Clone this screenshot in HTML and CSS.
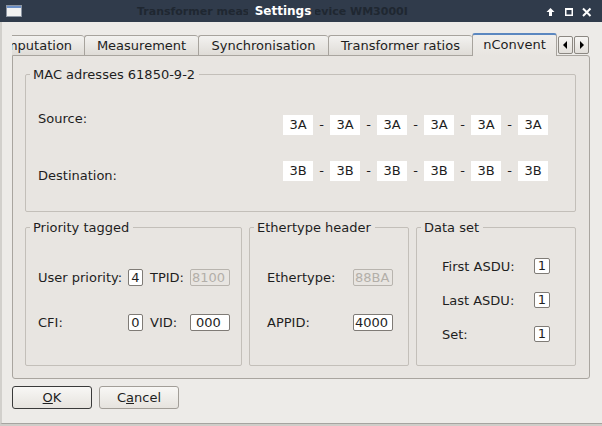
FILE: index.html
```
<!DOCTYPE html>
<html>
<head>
<meta charset="utf-8">
<link rel="stylesheet" href="styles.css">
</head>
<body>
<div class="titlebar">
  <div class="tb-left">
    <svg class="app-icon" width="16" height="12" viewBox="0 0 16 12"><rect x="0.5" y="0.5" width="15" height="11" fill="#f2f2f2" stroke="#8d96a3"/><rect x="1" y="1" width="14" height="2" fill="#6b8fc6"/></svg>
  </div>
  <div class="tb-mid"><span class="tb-title">Settings</span></div>
  <div class="tb-right">
    <svg width="63" height="22" viewBox="0 0 63 22">
      <polygon points="11.5,8 15.5,12 13,12 13,16 10,16 10,12 7.5,12" fill="#ffffff"/>
      <rect x="26.75" y="8.75" width="6.5" height="6.5" fill="none" stroke="#ffffff" stroke-width="1.5"/>
      <rect x="26" y="8" width="8" height="2" fill="#ffffff"/>
      <path d="M44 8.5 L51.5 16 M51.5 8.5 L44 16" stroke="#ffffff" stroke-width="2"/>
    </svg>
  </div>
  <div class="tb-ghost">Transformer measurement device WM3000I</div>
</div>
<div class="client">
  <div class="tabbar">
    <div class="tabclip">
      <div class="tab t-comp">Computation</div>
      <div class="tab t-meas">Measurement</div>
      <div class="tab t-sync">Synchronisation</div>
      <div class="tab t-tr">Transformer ratios</div>
      <div class="tab-sel">nConvent</div>
    </div>
    <div class="scrollbtn"><svg width="13" height="16" viewBox="0 0 13 16"><polygon points="4,8 8,4 8,12" fill="#000"/></svg></div>
    <div class="scrollbtn"><svg width="13" height="16" viewBox="0 0 13 16"><polygon points="5,4 9,8 5,12" fill="#000"/></svg></div>
  </div>
  <div class="pane">
    <fieldset class="group">
      <legend>MAC adresses 61850-9-2</legend>
      <div class="mac-grid">
        <div class="lbl lbl-src">Source:</div>
        <div class="octets">
          <span class="oct">3A</span><span class="dash">-</span><span class="oct">3A</span><span class="dash">-</span><span class="oct">3A</span><span class="dash">-</span><span class="oct">3A</span><span class="dash">-</span><span class="oct">3A</span><span class="dash">-</span><span class="oct">3A</span>
        </div>
        <div class="lbl lbl-dst">Destination:</div>
        <div class="octets">
          <span class="oct">3B</span><span class="dash">-</span><span class="oct">3B</span><span class="dash">-</span><span class="oct">3B</span><span class="dash">-</span><span class="oct">3B</span><span class="dash">-</span><span class="oct">3B</span><span class="dash">-</span><span class="oct">3B</span>
        </div>
      </div>
    </fieldset>
    <div class="lower">
      <fieldset class="group">
        <legend>Priority tagged</legend>
        <div class="prio-grid">
          <div class="lbl">User priority:</div>
          <div class="edit w15 center">4</div>
          <div class="lbl">TPID:</div>
          <div class="edit w40 dis">8100</div>
          <div class="lbl">CFI:</div>
          <div class="edit w15 center">0</div>
          <div class="lbl">VID:</div>
          <div class="edit w40 pad5">000</div>
        </div>
      </fieldset>
      <fieldset class="group">
        <legend>Ethertype header</legend>
        <div class="eth-grid">
          <div class="lbl">Ethertype:</div>
          <div class="edit w40 dis">88BA</div>
          <div class="lbl">APPID:</div>
          <div class="edit w40">4000</div>
        </div>
      </fieldset>
      <fieldset class="group">
        <legend>Data set</legend>
        <div class="ds-grid">
          <div class="lbl">First ASDU:</div>
          <div class="edit w16 center">1</div>
          <div class="lbl">Last ASDU:</div>
          <div class="edit w16 center">1</div>
          <div class="lbl">Set:</div>
          <div class="edit w16 center">1</div>
        </div>
      </fieldset>
    </div>
  </div>
  <div class="buttons">
    <button class="btn btn-default"><u>O</u>K</button>
    <button class="btn">C<u>a</u>ncel</button>
  </div>
</div>
</body>
</html>
```
FILE: styles.css
```
html, body {
  margin: 0;
  padding: 0;
}
body {
  width: 602px;
  height: 426px;
  overflow: hidden;
  background: #cfcdc9;
  font-family: "DejaVu Sans", "Liberation Sans", sans-serif;
  font-size: 13px;
  color: #1e1e1e;
}

/* title bar */
.titlebar {
  position: relative;
  display: flex;
  height: 22px;
  background: #303b4b;
}
.tb-left {
  flex: 0 0 24px;
}
.app-icon {
  display: block;
  margin: 5px 0 0 6px;
}
.tb-mid {
  flex: 1;
  text-align: center;
  position: relative;
  z-index: 1;
}
.tb-title {
  display: inline-block;
  padding: 1px 4px 0 7px;
  line-height: 21px;
  background: #303b4b;
  color: #ffffff;
  font-weight: bold;
  font-size: 12px;
}
.tb-right {
  flex: 0 0 63px;
}
.tb-right svg {
  display: block;
}
.tb-ghost {
  position: absolute;
  left: 137px;
  top: 1px;
  line-height: 21px;
  font-size: 11px;
  font-weight: bold;
  color: #1f2731;
  white-space: nowrap;
}

/* client area */
.client {
  border-left: 2px solid #d2d0cc;
  border-bottom: 1px solid #a6a4a0;
  background: #edebe8;
  padding: 11px 12px 0 10px;
  box-sizing: border-box;
  height: 402px;
}

/* tabs */
.tabbar {
  display: flex;
  height: 23px;
  margin-bottom: -1px;
  position: relative;
  z-index: 1;
}
.tabclip {
  flex: 0 0 545px;
  height: 23px;
  overflow: hidden;
  display: flex;
  align-items: flex-start;
}
.tab {
  flex: none;
  box-sizing: border-box;
  height: 20px;
  margin-top: 2px;
  border-top: 1px solid #a7a39d;
  border-left: 1px solid #a7a39d;
  border-radius: 3px 3px 0 0;
  background: linear-gradient(#f3f2f0, #dfdcd7);
  line-height: 19px;
  text-align: center;
  white-space: nowrap;
  overflow: hidden;
}
.t-comp { width: 109px; margin-left: -37px; }
.t-meas { width: 114px; }
.t-sync { width: 130px; }
.t-tr { width: 144px; }
.tab-sel {
  flex: none;
  box-sizing: border-box;
  width: 85px;
  height: 23px;
  border-top: 2px solid #5b87c0;
  border-left: 1px solid #a7a39d;
  border-right: 1px solid #a7a39d;
  border-radius: 3px 3px 0 0;
  background: linear-gradient(#f0eeeb, #e8e5e1);
  line-height: 19px;
  text-align: center;
  white-space: nowrap;
  overflow: hidden;
}
.scrollbtn {
  flex: none;
  box-sizing: border-box;
  width: 15px;
  height: 18px;
  margin-top: 3px;
  margin-left: 1px;
  border: 1px solid #8c8882;
  border-radius: 2px;
  background: linear-gradient(#f7f6f4, #e2dfda);
}
.scrollbtn:first-of-type {
  margin-left: 2px;
}
.scrollbtn svg {
  display: block;
}

/* pane */
.pane {
  box-sizing: border-box;
  height: 324px;
  border: 1px solid #a9a59f;
  border-radius: 0 3px 3px 3px;
  background: #e8e5e1;
  padding: 11px 13px 12px 12px;
}

/* group boxes */
.group {
  margin: 0;
  padding: 0;
  min-width: 0;
  border: 1px solid #c3bfb9;
  border-radius: 2px;
}
.group legend {
  margin-left: 4px;
  padding: 0 4px 0 3px;
  line-height: 15px;
}
.lbl {
  line-height: 15px;
  white-space: nowrap;
}

.mac-grid {
  display: grid;
  grid-template-columns: 245px auto;
  grid-template-rows: 20px 20px;
  row-gap: 26px;
  padding: 33px 0 30px 12px;
}
.lbl-src {
  align-self: start;
  margin-top: -4px;
}
.lbl-dst {
  align-self: start;
  margin-top: 7px;
}
.octets {
  display: flex;
}
.oct {
  width: 30px;
  height: 20px;
  line-height: 20px;
  background: #ffffff;
  text-align: center;
}
.dash {
  width: 17px;
  line-height: 20px;
  text-align: center;
}

.lower {
  display: grid;
  grid-template-columns: 217px 160px 160px;
  column-gap: 7px;
  margin-top: 8px;
}

.edit {
  box-sizing: border-box;
  height: 17px;
  line-height: 15px;
  border: 1px solid #7f7b76;
  border-radius: 2px;
  background: #ffffff;
  padding-left: 1px;
  white-space: nowrap;
  overflow: hidden;
}
.edit.center {
  text-align: center;
  padding-left: 0;
}
.edit.pad5 {
  padding-left: 5px;
}
.edit.dis {
  border-color: #b8b4ae;
  background: #e8e5e1;
  color: #b3afa9;
}
.w15 { width: 15px; }
.w16 { width: 16px; height: 16px; line-height: 14px; }
.w40 { width: 40px; }

.prio-grid {
  display: grid;
  grid-template-columns: 90px 22px 40px 40px;
  grid-template-rows: 17px 17px;
  row-gap: 28px;
  align-items: center;
  padding: 34px 0 34px 12px;
}
.eth-grid {
  display: grid;
  grid-template-columns: 86px 40px;
  grid-template-rows: 17px 17px;
  row-gap: 28px;
  align-items: center;
  padding: 34px 0 34px 17px;
}
.ds-grid {
  display: grid;
  grid-template-columns: 92px 16px;
  grid-template-rows: 16px 16px 16px;
  row-gap: 18px;
  align-items: center;
  padding: 23px 0 23px 25px;
}

/* buttons */
.buttons {
  display: flex;
  gap: 7px;
  margin-top: 7px;
}
.btn {
  box-sizing: border-box;
  width: 80px;
  height: 23px;
  padding: 0;
  border: 1px solid #a29e98;
  border-radius: 3px;
  background: linear-gradient(#f8f7f5, #e6e3de);
  font-family: "DejaVu Sans", "Liberation Sans", sans-serif;
  font-size: 13px;
  color: #1e1e1e;
}
.btn-default {
  border-color: #3a3a3a;
}
```
